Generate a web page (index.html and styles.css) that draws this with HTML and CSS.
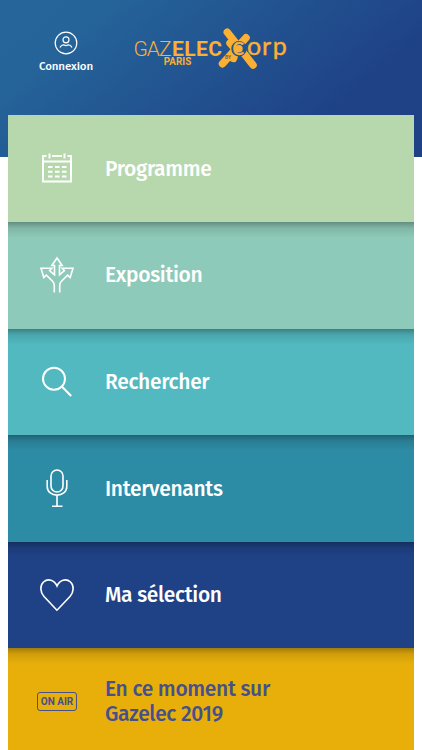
FILE: index.html
```html
<!doctype html>
<html lang="fr">
<head>
    <meta charset="UTF-8">
    <title>Gazelec</title>
    <link rel="stylesheet" href="styles.css">
</head>
<body>
<div class="header">
    <a class="login">
        <svg width="24" height="24" viewBox="0 0 24 24">
            <circle cx="12" cy="12" r="10.8"/>
            <circle cx="12" cy="8.8" r="3"/>
            <path d="M6 16.5c1.2-2.4 3.1-3 4.2-2.4q1.8 1.1 3.6 0c1.1-.6 3 0 4.2 2.4"/>
        </svg>
        <span>Connexion</span>
    </a>
    <svg class="logo" width="160" height="46" viewBox="130 25 160 46">
        <g class="logo-cross">
            <path d="M227.300 32.300l25.700 32.700M246 37.700l-23.500 26"/>
            <path d="M230 43l6 7-2.500 8.500"/>
        </g>
        <circle class="logo-hole" cx="239" cy="48.800" r="5.700"/>
        <text class="logo-thin" x="133.500" y="56" textLength="38">GAZ</text>
        <text class="logo-bold" x="172" y="56" textLength="50">ELEC</text>
        <text class="logo-paris" x="163.800" y="65.300" textLength="27.500" lengthAdjust="spacingAndGlyphs">PARIS</text>
        <text class="logo-by" x="225" y="58.500">BY</text>
        <text class="logo-corp" x="232.300 246.900 262 272.700" y="55.200">corp</text>
    </svg>
</div>
<div class="menu">
    <a class="item programme">
        <svg class="icon" width="40" height="40" viewBox="0 0 40 40">
            <path d="M9.500 7H6v25.500h28V7h-3.500M6 12.500h28"/>
            <path d="M12.500 4.500v5M27.500 4.500v5M15 7h10"/>
            <path d="M11 18h4.500M18 18h4.500M25 18h4.500M11 22.700h4.500M18 22.700h4.500M25 22.700h4.500M11 27.400h4.500M18 27.400h4.500M25 27.400h4.500"/>
        </svg>
        <span class="label">Programme</span>
    </a>
    <a class="item exposition">
        <svg class="icon thin" width="40" height="40" viewBox="0 0 40 40">
            <path d="M17.300 37.500v-7q0-2.500-1.700-4.200l-6.300-6.200-2.500 2.500L4 13.200l11-.200-2.400 2.600 4.900 4.200V10.500h-2.600L20 3l5.100 7.500h-2.600v9.300l4.900-4.200-2.400-2.600 11 .200-2.800 9.400-2.500-2.500-6.300 6.200q-1.700 1.700-1.700 4.200v7"/>
        </svg>
        <span class="label">Exposition</span>
    </a>
    <a class="item rechercher">
        <svg class="icon" width="40" height="40" viewBox="0 0 40 40">
            <circle cx="17" cy="16.700" r="11"/>
            <path d="M24.800 24.500l9.400 9.500"/>
        </svg>
        <span class="label">Rechercher</span>
    </a>
    <a class="item intervenants">
        <svg class="icon thin" width="40" height="40" viewBox="0 0 40 40">
            <rect x="14" y="2" width="12" height="22" rx="6"/>
            <path d="M10.200 12v6.500c0 11.500 19.600 11.500 19.600 0V12M20 27v11M15 38.200h10.500"/>
        </svg>
        <span class="label">Intervenants</span>
    </a>
    <a class="item selection">
        <svg class="icon thin" width="40" height="40" viewBox="0 0 40 40">
            <path d="M20 35.200L7 21.500C3 17 2.800 10.500 6.500 7c4.500-4 11-2 13.500 4 2.500-6 9-8 13.500-4 3.700 3.500 3.500 10-.5 14.500z"/>
        </svg>
        <span class="label">Ma sélection</span>
    </a>
    <a class="item live">
        <span class="onair">ON AIR</span>
        <span class="label">En ce moment sur<br>Gazelec 2019</span>
    </a>
</div>
</body>
</html>
```
FILE: styles.css
```css
* {
    margin: 0;
    padding: 0;
    box-sizing: border-box;
}

body {
    height: 750px;
    overflow: hidden;
    background-color: #fff;
    font-family: "Fira Sans", "Noto Sans", sans-serif;
}

.header {
    display: flex;
    align-items: flex-start;
    height: 157px;
    padding: 25px 0 0 36px;
    background: linear-gradient(140deg, #256699 0%, #256499 18%, #1f4287 76%, #1f4287 100%);
}

.login {
    display: flex;
    flex-direction: column;
    align-items: center;
    width: 60px;
    padding-top: 6px;
    color: #fff;
    font-size: 11.500px;
    font-weight: 500;
    line-height: 16px;
    letter-spacing: -.1px;
}

.login svg {
    margin-bottom: 3px;
    fill: none;
    stroke: #fff;
    stroke-width: 1.200;
}

.logo {
    margin-left: 34px;
    fill: #fbb034;
}

.logo-cross {
    fill: none;
    stroke: #fbb034;
    stroke-width: 7.500;
    stroke-linecap: round;
}

.logo-hole {
    fill: none;
    stroke: #24528f;
    stroke-width: 4;
}

.logo-thin {
    font: 300 21px Roboto, sans-serif;
}

.logo-bold {
    font: 700 21px Roboto, sans-serif;
}

.logo-paris {
    font: 700 10px Roboto, sans-serif;
}

.logo-by {
    font: 700 5px Roboto, sans-serif;
    fill: #6d6957;
}

.logo-corp {
    font: 400 25px Lato, sans-serif;
    stroke: #fbb034;
    stroke-width: .4;
}

.menu {
    width: 406px;
    margin: -41.700px 0 0 8px;
}

.item {
    display: flex;
    align-items: center;
    height: 106.600px;
    padding-left: 29px;
    color: #fff;
    background-image: linear-gradient(rgba(0, 0, 0, .300), rgba(0, 0, 0, .100) 6px, rgba(0, 0, 0, 0) 16px);
}

.icon {
    width: 40px;
    height: 40px;
    fill: none;
    stroke: #fff;
    stroke-width: 2;
}

.icon.thin {
    stroke-width: 1.600;
}

.label {
    margin-left: 28px;
    padding-top: 1.500px;
    font-size: 21px;
    font-weight: 500;
    line-height: 25px;
    letter-spacing: -.320px;
}

.programme {
    background: #b7d8ad;
}

.exposition {
    background-color: #8ecab9;
}

.rechercher {
    background-color: #52b9c1;
}

.intervenants {
    background-color: #2d8ca5;
}

.selection {
    background-color: #1f4287;
}

.live {
    color: #46508a;
    background-color: #e8af0b;
}

.onair {
    width: 40px;
    height: 19px;
    border: 1px solid #46508a;
    border-radius: 3px;
    font: 700 10px/17px Roboto, sans-serif;
    text-align: center;
}
```
